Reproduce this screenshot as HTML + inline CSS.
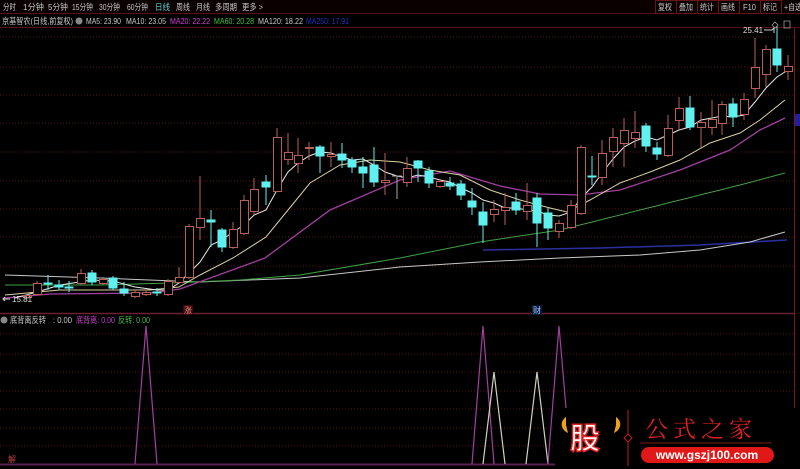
<!DOCTYPE html>
<html><head><meta charset="utf-8"><style>
body{margin:0;width:800px;height:469px;background:#000;overflow:hidden;font-family:"Liberation Sans","Noto Sans CJK SC",sans-serif;}
</style></head><body>
<div style="position:absolute;left:0;top:0;width:800px;height:469px">
<svg width="800" height="469" style="position:absolute;left:0;top:0" font-family="Liberation Sans, Noto Sans CJK SC, sans-serif">
<rect width="800" height="469" fill="#000"/>
<!-- toolbar -->
<rect x="0" y="0" width="800" height="13" fill="#0a0000"/>
<line x1="0" y1="13.5" x2="800" y2="13.5" stroke="#5a1010"/>
<line x1="0" y1="27.5" x2="800" y2="27.5" stroke="#5a1010"/>
<g stroke="#6a1515" fill="none">
<rect x="655.5" y="0.5" width="21" height="13"/><rect x="676.5" y="0.5" width="21" height="13"/><rect x="697.5" y="0.5" width="21" height="13"/><rect x="718.5" y="0.5" width="21" height="13"/><rect x="739.5" y="0.5" width="21" height="13"/><rect x="760.5" y="0.5" width="21" height="13"/>
</g>
<g font-size="8.5" fill="#c8c8c8" lengthAdjust="spacingAndGlyphs">
<text x="3" y="10" textLength="13" lengthAdjust="spacingAndGlyphs">分时</text>
<text x="23" y="10" textLength="21" lengthAdjust="spacingAndGlyphs">1分钟</text>
<text x="48" y="10" textLength="20" lengthAdjust="spacingAndGlyphs">5分钟</text>
<text x="72" y="10" textLength="21" lengthAdjust="spacingAndGlyphs">15分钟</text>
<text x="99" y="10" textLength="21" lengthAdjust="spacingAndGlyphs">30分钟</text>
<text x="127" y="10" textLength="21" lengthAdjust="spacingAndGlyphs">60分钟</text>
<text x="155" y="10" fill="#60d0d0" textLength="15" lengthAdjust="spacingAndGlyphs">日线</text>
<text x="176" y="10" textLength="14" lengthAdjust="spacingAndGlyphs">周线</text>
<text x="196" y="10" textLength="14" lengthAdjust="spacingAndGlyphs">月线</text>
<text x="215" y="10" textLength="22" lengthAdjust="spacingAndGlyphs">多周期</text>
<text x="242" y="10" textLength="21" lengthAdjust="spacingAndGlyphs">更多 &gt;</text>
<text x="658" y="10" textLength="14" lengthAdjust="spacingAndGlyphs">复权</text>
<text x="679" y="10" textLength="14" lengthAdjust="spacingAndGlyphs">叠加</text>
<text x="700" y="10" textLength="14" lengthAdjust="spacingAndGlyphs">统计</text>
<text x="721" y="10" textLength="14" lengthAdjust="spacingAndGlyphs">画线</text>
<text x="743" y="10" textLength="13" lengthAdjust="spacingAndGlyphs">F10</text>
<text x="763" y="10" textLength="14" lengthAdjust="spacingAndGlyphs">标记</text>
<text x="784" y="10" textLength="18" lengthAdjust="spacingAndGlyphs">+自选</text>
<text x="2" y="24" textLength="71" lengthAdjust="spacingAndGlyphs">京基智农(日线,前复权)</text>
<text x="86" y="24" textLength="35" lengthAdjust="spacingAndGlyphs">MA5: 23.90</text>
<text x="126" y="24" textLength="40" lengthAdjust="spacingAndGlyphs">MA10: 23.05</text>
<text x="170" y="24" fill="#d040d0" textLength="40" lengthAdjust="spacingAndGlyphs">MA20: 22.22</text>
<text x="214" y="24" fill="#40c040" textLength="40" lengthAdjust="spacingAndGlyphs">MA60: 20.28</text>
<text x="258" y="24" textLength="45" lengthAdjust="spacingAndGlyphs">MA120: 18.22</text>
<text x="306" y="24" fill="#2030c0" textLength="43" lengthAdjust="spacingAndGlyphs">MA250: 17.91</text>
</g>
<circle cx="79" cy="21" r="3.5" fill="#888"/>
<!-- grid -->
<g stroke="#5a1414" stroke-dasharray="1,2">
<line x1="0" y1="37" x2="793" y2="37"/><line x1="0" y1="67" x2="793" y2="67"/><line x1="0" y1="95" x2="793" y2="95"/><line x1="0" y1="123" x2="793" y2="123"/><line x1="0" y1="152" x2="793" y2="152"/><line x1="0" y1="181" x2="793" y2="181"/><line x1="0" y1="209" x2="793" y2="209"/><line x1="0" y1="237" x2="793" y2="237"/><line x1="0" y1="266" x2="793" y2="266"/>
<line x1="0" y1="334" x2="793" y2="334"/><line x1="0" y1="354" x2="793" y2="354"/><line x1="0" y1="372" x2="793" y2="372"/><line x1="0" y1="391" x2="793" y2="391"/><line x1="0" y1="409" x2="793" y2="409"/><line x1="0" y1="428" x2="793" y2="428"/><line x1="0" y1="446" x2="793" y2="446"/>
</g>
<line x1="794.5" y1="28" x2="794.5" y2="469" stroke="#7a1818"/>
<rect x="795" y="114" width="5" height="12" fill="#2020a0"/>
<line x1="0" y1="313.5" x2="794" y2="313.5" stroke="#6a2030" stroke-width="1.5"/>
<line x1="0" y1="464.5" x2="794" y2="464.5" stroke="#5a2050" stroke-width="2"/>
<!-- MA lines -->
<g fill="none" stroke-width="1">
<polyline stroke="#2a30a0" stroke-width="1.5" points="483,250 600,248 700,245 787,240"/>
<polyline stroke="#c8c8c8" points="5,275 100,278 200,282 300,278 400,267 480,262 560,258 640,255 700,250 750,242 785,232"/>
<polyline stroke="#40a040" points="5,285 100,285 170,283 240,280 300,275 400,258 480,242 560,230 640,210 700,195 740,185 785,173"/>
<polyline stroke="#a040a0" stroke-width="1.3" points="5,298 50,294 150,293 180,289 265,258 330,210 400,180 450,171 500,186 540,194 580,195 620,190 680,170 730,150 760,130 785,118"/>
<polyline stroke="#d8d0a0" points="5,295 60,290 150,290 179,287 200,275 233,258 266,237 288,210 310,183 340,165 370,160 400,162 430,170 460,175 490,190 520,200 550,208 567,212 590,200 620,183 650,172 680,160 710,143 740,133 760,120 785,100"/>
<polyline stroke="#e8e8e8" points="15,298 37,292 60,285 92,280 113,281 135,287 157,290 168,290 179,283 189,273 200,262 211,245 222,240 233,232 244,225 254,215 266,210 277,190 288,172 298,163 309,156 320,152 331,153 342,157 352,160 363,159 374,165 385,172 397,176 407,178 418,175 429,177 440,180 450,182 461,188 472,193 483,200 494,203 505,208 516,208 527,210 537,211 548,215 559,216 571,212 581,198 592,187 602,173 613,159 624,147 635,141 646,137 657,140 668,135 679,130 690,127 701,120 712,118 722,116 733,117 744,115 755,102 766,88 777,77 788,70"/>
</g>
<!-- candles red hollow -->
<g stroke="#b86058" fill="#000" stroke-width="1">
<path d="M27,293V299M37,281V295M81,269V285M103,277V285M135,290V298M146,290V296M168,279V296M179,267V283M189,224V279M200,176V240M233,222V249M244,195V235M254,178V215M277,128V192M288,133V165M298,138V173M309,142V160M331,142V167M385,153V195M407,157V187M440,179V188M494,200V222M505,193V225M527,183V220M559,220V238M571,200V229M581,145V215M602,140V185M613,128V167M624,118V167M635,111V148M668,115V157M679,97V130M701,112V148M712,100V135M722,101V135M744,93V120M755,38V98M766,45V87M788,55V80"/>
<rect x="23.5" y="295.5" width="8" height="2"/><rect x="33.5" y="283.5" width="8" height="11"/><rect x="77.5" y="273.5" width="8" height="10"/><rect x="99.5" y="279.5" width="8" height="4"/><rect x="131.5" y="292.5" width="8" height="4"/><rect x="142.5" y="292.5" width="8" height="2"/><rect x="164.5" y="281.5" width="8" height="13"/><rect x="175.5" y="277.5" width="8" height="5"/><rect x="185.5" y="226.5" width="8" height="51"/><rect x="196.5" y="218.5" width="8" height="9"/><rect x="229.5" y="229.5" width="8" height="18"/><rect x="240.5" y="200.5" width="8" height="33"/><rect x="250.5" y="189.5" width="8" height="22"/><rect x="273.5" y="137.5" width="8" height="54"/><rect x="284.5" y="152.5" width="8" height="7"/><rect x="294.5" y="155.5" width="8" height="8"/><rect x="305.5" y="147.5" width="8" height="1"/><rect x="327.5" y="154.5" width="8" height="2"/><rect x="381.5" y="180.5" width="8" height="2"/><rect x="403.5" y="168.5" width="8" height="14"/><rect x="436.5" y="181.5" width="8" height="5"/><rect x="490.5" y="209.5" width="8" height="5"/><rect x="501.5" y="207.5" width="8" height="3"/><rect x="523.5" y="205.5" width="8" height="6"/><rect x="555.5" y="223.5" width="8" height="8"/><rect x="567.5" y="205.5" width="8" height="22"/><rect x="577.5" y="147.5" width="8" height="66"/><rect x="598.5" y="153.5" width="8" height="24"/><rect x="609.5" y="137.5" width="8" height="14"/><rect x="620.5" y="130.5" width="8" height="13"/><rect x="631.5" y="132.5" width="8" height="6"/><rect x="664.5" y="128.5" width="8" height="27"/><rect x="675.5" y="108.5" width="8" height="12"/><rect x="697.5" y="122.5" width="8" height="5"/><rect x="708.5" y="119.5" width="8" height="8"/><rect x="718.5" y="104.5" width="8" height="19"/><rect x="740.5" y="99.5" width="8" height="15"/><rect x="751.5" y="67.5" width="8" height="21"/><rect x="762.5" y="49.5" width="8" height="25"/><rect x="784.5" y="66.5" width="8" height="5"/>
</g>
<!-- cyan -->
<g stroke="#60f0f0" fill="#60f0f0">
<path d="M48,275V290M59,280V290M69,281V292M92,270V285M113,276V290M124,282V296M157,288V296M211,210V247M222,228V252M266,175V205M320,145V173M342,143V168M352,157V173M363,157V188M374,147V187M418,160V182M429,167V188M450,177V190M461,180V200M472,188V215M483,202V243M516,193V215M537,193V247M548,208V240M592,156V185M646,123V152M657,142V160M690,96V130M733,98V127M777,26V72"/>
<rect x="44" y="283" width="8" height="1"/><rect x="55" y="285" width="8" height="2"/><rect x="65" y="287" width="8" height="1"/><rect x="88" y="273" width="8" height="9"/><rect x="109" y="278" width="8" height="10"/><rect x="120" y="289" width="8" height="4"/><rect x="153" y="292" width="8" height="1"/><rect x="207" y="220" width="8" height="2"/><rect x="218" y="230" width="8" height="17"/><rect x="262" y="182" width="8" height="5"/><rect x="316" y="147" width="8" height="9"/><rect x="338" y="154" width="8" height="6"/><rect x="348" y="160" width="8" height="7"/><rect x="359" y="167" width="8" height="6"/><rect x="370" y="165" width="8" height="17"/><rect x="414" y="161" width="8" height="7"/><rect x="425" y="171" width="8" height="12"/><rect x="446" y="183" width="8" height="3"/><rect x="457" y="184" width="8" height="11"/><rect x="468" y="201" width="8" height="6"/><rect x="479" y="212" width="8" height="13"/><rect x="512" y="202" width="8" height="8"/><rect x="533" y="198" width="8" height="25"/><rect x="544" y="213" width="8" height="15"/><rect x="588" y="176" width="8" height="1"/><rect x="642" y="126" width="8" height="20"/><rect x="653" y="148" width="8" height="6"/><rect x="686" y="108" width="8" height="19"/><rect x="729" y="104" width="8" height="13"/><rect x="773" y="49" width="8" height="16"/>
</g>
<g stroke="#aaa"><path d="M397,176V199M392,176H402"/></g>
<text x="743" y="33" font-size="8" fill="#ddd">25.41</text>
<path d="M764,30H772L774,28V33" stroke="#ccc" fill="none"/>
<path d="M772,25L775,22L778,25L775,28Z M784,21h6v7h-6z" stroke="#999" fill="none" stroke-width="0.8"/>
<path d="M3,299H10M5,297L3,299L5,301" stroke="#ddd" fill="none"/>
<text x="12" y="302" font-size="8" fill="#ddd">15.81</text>
<rect x="183" y="305" width="10" height="10" fill="#3a0a0a"/><text x="184" y="313" font-size="8" fill="#ff9090">涨</text>
<rect x="532" y="305" width="10" height="10" fill="#0a1a3a"/><text x="533" y="313" font-size="8" fill="#a0c8ff">财</text>
<!-- indicator -->
<circle cx="4" cy="320" r="3.5" fill="#888"/>
<g font-size="8.5">
<text x="10" y="323" fill="#c8c8c8" textLength="36" lengthAdjust="spacingAndGlyphs">底背离反转</text>
<text x="53" y="323" fill="#c8c8c8" textLength="19" lengthAdjust="spacingAndGlyphs">: 0.00</text>
<text x="76" y="323" fill="#c040c0" textLength="39" lengthAdjust="spacingAndGlyphs">底背离: 0.00</text>
<text x="118" y="323" fill="#40c040" textLength="32" lengthAdjust="spacingAndGlyphs">反转: 0.00</text></g>
<text x="8" y="462" font-size="8" fill="#c04040">解</text>
<g fill="none" stroke-width="1.2">
<polyline stroke="#a040a0" points="135,464 146,326 157,464"/>
<polyline stroke="#a040a0" points="472,464 483,326 494,464"/>
<polyline stroke="#d0d0c0" points="483,464 494,372 505,464"/>
<polyline stroke="#d0d0c0" points="526,464 537,372 548,464"/>
<polyline stroke="#a040a0" points="548,464 559,326 566,408"/>
</g>
<!-- logo -->
<rect x="555" y="408" width="245" height="61" fill="#000"/>
<path d="M566,417c-6,4 -6,12 2,16 l-2,-8z M616,417c6,4 6,12 -2,16 l2,-8z" fill="#f0a020"/>
<text x="570" y="449" font-size="30" font-weight="bold" fill="#fff" stroke="#e02020" stroke-width="1.5" font-family="Noto Sans CJK SC, sans-serif">股</text>
<line x1="628" y1="410" x2="628" y2="466" stroke="#b02020"/>
<path d="M628,434l4,4l-4,4l-4,-4z" stroke="#c02020" fill="#000"/>
<text x="645" y="437" font-size="23" fill="#e02020" letter-spacing="5" font-family="Noto Serif CJK SC, Noto Sans CJK SC, serif">公式之家</text>
<line x1="640" y1="443" x2="772" y2="443" stroke="#801818"/>
<rect x="641" y="447" width="133" height="16" rx="8" fill="#e01818"/>
<text x="707" y="459" font-size="12" font-weight="bold" fill="#fff" text-anchor="middle">www.gszj100.com</text>
</svg>
</div>
</body></html>
